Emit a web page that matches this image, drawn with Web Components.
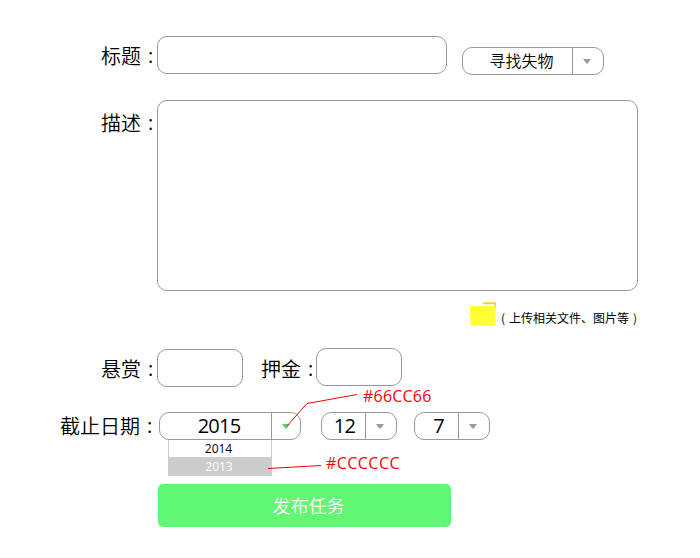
<!DOCTYPE html>
<html lang="zh-CN">
<head>
<meta charset="utf-8">
<title>发布任务</title>
<style>
body { margin: 0; background: #fff; color: #000; font-family: "Noto Sans CJK SC", sans-serif; }
</style>
</head>
<body>
<task-form></task-form>
<script>
function define(name, html) {
  const template = document.createElement('template');
  template.innerHTML = html;
  customElements.define(name, class extends HTMLElement {
    constructor() {
      super();
      this.attachShadow({ mode: 'open' }).appendChild(template.content.cloneNode(true));
    }
  });
}

define('field-label', `
<style>
:host { display: flex; flex: none; font-size: 20px; line-height: 30px; font-weight: 350; white-space: nowrap; }
.colon { width: 16px; box-sizing: border-box; padding-left: 7px; font-family: "Open Sans", sans-serif; font-weight: 400; }
</style>
<slot></slot><span class="colon">:</span>`);

define('text-box', `
<style>
:host { display: block; flex: none; box-sizing: border-box; width: var(--w); height: var(--h, 38px); border: 1px solid #999; border-radius: 10px; background: #fff; }
</style>`);

define('drop-select', `
<style>
:host { display: flex; flex: none; position: relative; box-sizing: border-box; width: var(--w); height: 28px; border: 1px solid #999; border-radius: 10px; font: var(--weight, 400) 20px/26px "Open Sans", "Noto Sans CJK SC", sans-serif; }
.value { flex: 1; text-align: center; padding-left: var(--shift, 0); font-size: var(--size, 20px); white-space: nowrap; letter-spacing: var(--ls, -.8px); }
.arrow { box-sizing: border-box; width: var(--aw, 29px); padding-right: 1px; border-left: 1px solid #999; color: var(--arrow, #999); }
svg { display: block; margin: 11px 0 0 10px; }
</style>
<span class="value"><slot></slot></span>
<span class="arrow"><svg width="8" height="5" viewBox="0 0 8 5"><path d="M0 0H8L4.7 4.5H3.3Z" fill="currentColor"/></svg></span>
<slot name="menu"></slot>`);

define('option-menu', `
<style>
:host { display: block; position: absolute; left: 8px; top: 27px; width: 104px; box-sizing: border-box; font: 400 12px/17px "Open Sans", sans-serif; border: 1px solid #ccc; border-top: 0; }
</style><slot></slot>`);

define('option-item', `
<style>
:host { display: block; height: 17px; text-align: center; padding-right: 3px; }
:host([active]) { height: 18px; background: #ccc; color: #fff; line-height: 19px; padding-right: 2px; }
</style><slot></slot>`);

define('upload-hint', `
<style>
:host { display: flex; font-size: 12px; line-height: 18px; white-space: nowrap; }
svg { display: block; }
.text { padding-top: 7px; }
.paren { display: inline-block; width: 12px; text-align: center; }
</style>
<svg width="27" height="25" viewBox="0 0 27 25"><path d="M13 0.3H26V6H24.6V2.2H13Z" fill="#fc3"/><path d="M0 4H25.7V23.5H0.5Z" fill="#ff3"/></svg>
<span class="text"><span class="paren">(</span><slot></slot><span class="paren">)</span></span>`);

define('submit-button', `
<style>
:host { display: block; width: 293px; height: 43px; border-radius: 5px; background: #61f775; color: #fff; font-size: 18px; line-height: 43px; text-align: center; }
span { padding-left: 8px; font-weight: 350; }
</style><span><slot></slot></span>`);

/* Red design note with a leader line towards the annotated part */
define('colour-note', `
<style>
:host { position: absolute; display: flex; color: #f00; font: 400 16px/20px "Open Sans", sans-serif; letter-spacing: var(--ls, 0); }
</style><slot name="line"></slot><span><slot></slot></span>`);

define('task-form', `
<style>
:host { display: block; box-sizing: border-box; position: relative; width: 700px; height: 558px; padding-top: 36px; }
.row { display: flex; align-items: flex-start; }
.title { padding-left: 101px; height: 64px; }
.desc { padding-left: 101px; height: 202px; }
.hint { padding-left: 470px; height: 46px; }
.money { padding-left: 101px; height: 64px; }
.date { padding-left: 60px; height: 72px; }
.submit { padding-left: 158px; }
</style>
<div class="row title">
  <field-label style="margin-top:5px">标题</field-label>
  <text-box style="--w:290px"></text-box>
  <drop-select style="--w:142px;--size:16px;--weight:350;--ls:0;--aw:31px;--shift:8px;margin:11px 0 0 15px">寻找失物</drop-select>
</div>
<div class="row desc">
  <field-label style="margin-top:8px">描述</field-label>
  <text-box style="--w:481px;--h:191px"></text-box>
</div>
<div class="row hint"><upload-hint>上传相关文件、图片等</upload-hint></div>
<div class="row money">
  <field-label style="margin-top:6px">悬赏</field-label>
  <text-box style="--w:86px;margin-top:1px"></text-box>
  <field-label style="margin:6px -1px 0 18px">押金</field-label>
  <text-box style="--w:86px"></text-box>
</div>
<div class="row date">
  <field-label style="margin:-1px 3px 0 0">截止日期</field-label>
  <drop-select style="--w:142px;--shift:7px;--arrow:#6c6">2015
    <option-menu slot="menu"><option-item>2014</option-item><option-item active>2013</option-item></option-menu>
  </drop-select>
  <drop-select style="--w:76px;--aw:31px;--shift:2px;margin-left:20px">12</drop-select>
  <drop-select style="--w:76px;--aw:31px;--shift:4px;margin-left:17px">7</drop-select>
</div>
<div class="row submit"><submit-button>发布任务</submit-button></div>
<colour-note style="--ls:.2px;left:287px;top:386px"><svg slot="line" width="76" height="40"><path d="M0 40L20 17.5L70 8.5" fill="none" stroke="#f00"/></svg>#66CC66</colour-note>
<colour-note style="--ls:.45px;left:268px;top:453px"><svg slot="line" width="58" height="20"><path d="M0 15.5L53 12.5" fill="none" stroke="#f00"/></svg>#CCCCCC</colour-note>`);
</script>
</body>
</html>
